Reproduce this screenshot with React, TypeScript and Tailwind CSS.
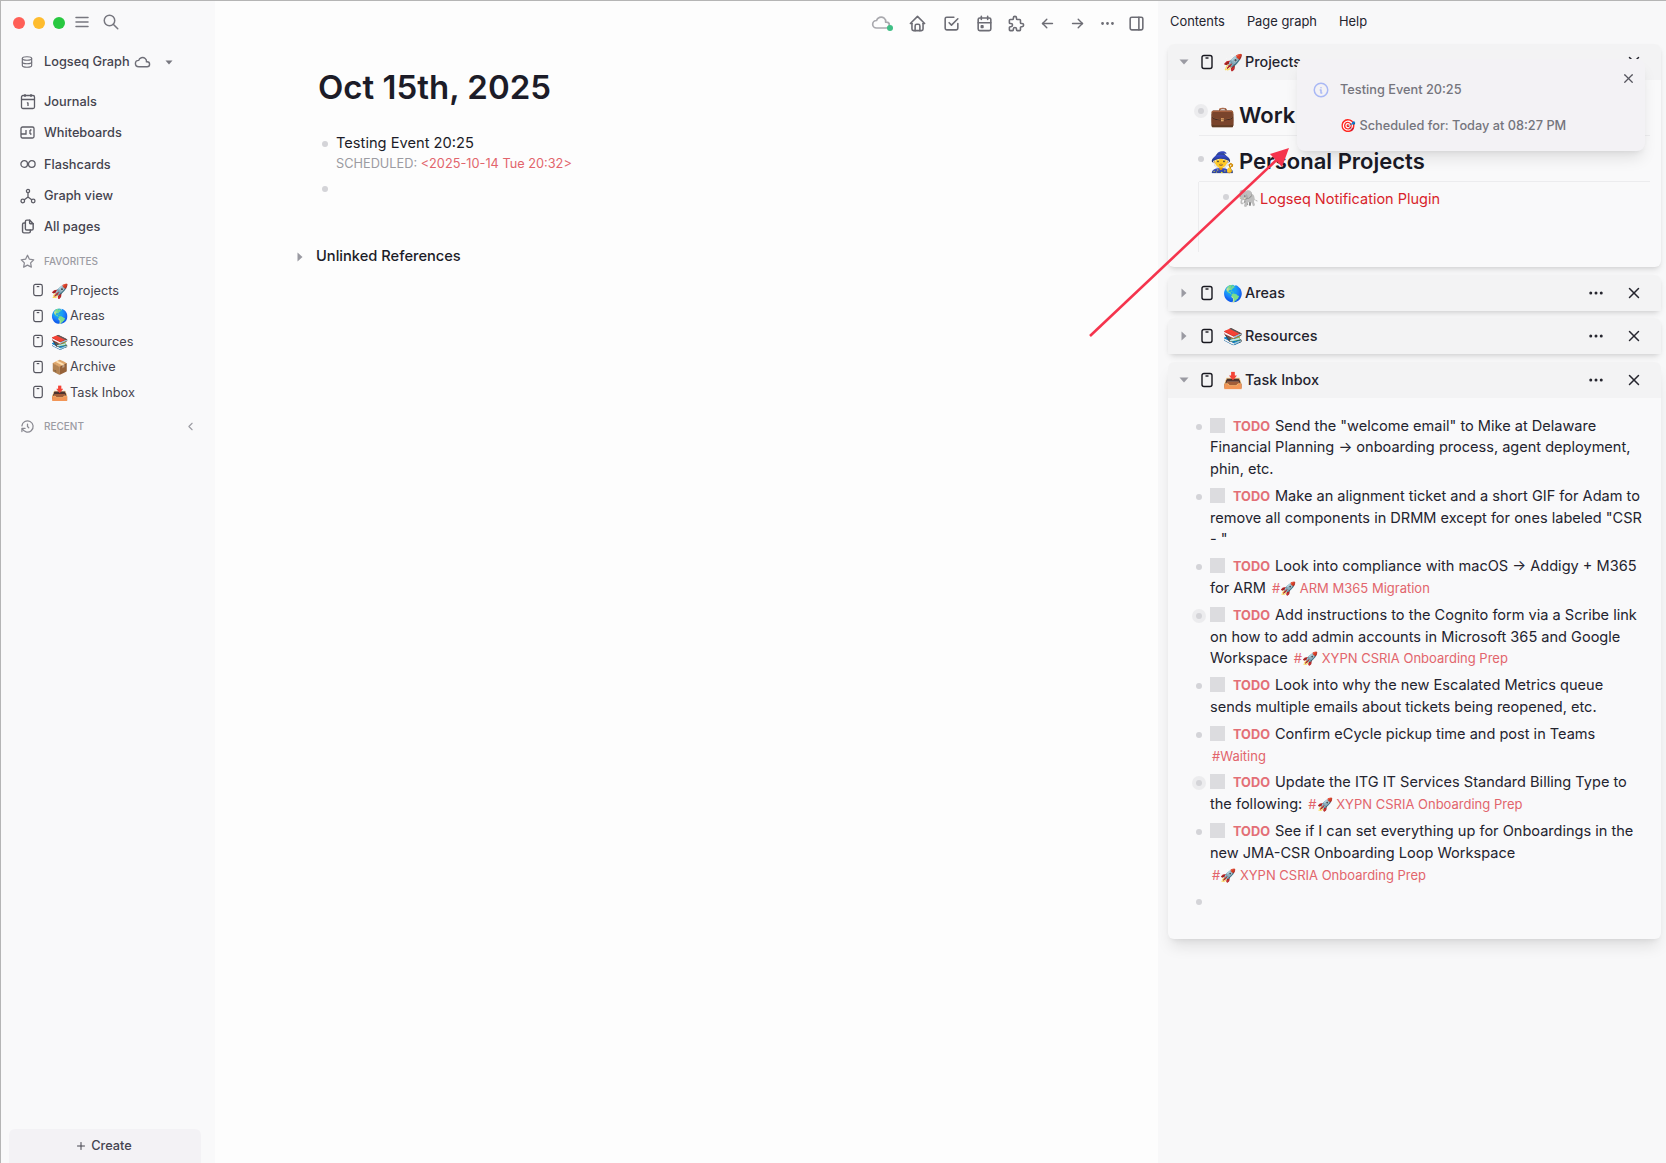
import {
  TbCalendarEvent, TbCheckbox, TbChevronLeft, TbCloud, TbDatabase, TbDots, TbFiles, TbHistory, TbHome,
  TbInfoCircle, TbLayoutSidebarRight, TbMenu2, TbPuzzle, TbSearch, TbStar, TbX,
  TbArrowLeft, TbArrowRight, TbPlus,
} from "react-icons/tb";

const Caret = ({ open }: { open?: boolean }) => (
  <svg width="10" height="10" viewBox="0 0 10 10" className="shrink-0 text-[#9a9aa2]" fill="currentColor">
    {open ? <path d="M0.5 2.5h9L5 7.5z" /> : <path d="M2.5 0.5v9l5-4.5z" />}
  </svg>
);

const PageIcon = ({ className }: { className?: string }) => (
  <svg width="14" height="16" viewBox="0 0 14 16" fill="none" stroke="currentColor" strokeWidth="1.4" className={className}>
    <rect x="2" y="1.5" width="10" height="13" rx="2" />
    <path d="M5.5 4h3" />
  </svg>
);

const Tag = ({ children }: { children: React.ReactNode }) => (
  <span className="inline-block mx-[2px] text-[13px] text-[#e2656c]">{children}</span>
);

const Todo = () => (
  <>
    <span className="inline-block w-[15px] h-[15px] bg-[#dcdcdf] align-[-2px] mr-[8px]" />
    <span className="text-[12.75px] font-bold text-[#e36f76] mr-[5px]">TODO</span>
  </>
);

const Dot = () => <span className="w-[6px] h-[6px] rounded-full bg-[#d4d4d8]" />;

const Block = ({ children, active }: { children: React.ReactNode; active?: boolean }) => (
  <div className="flex mb-[5px]">
    <div className="w-[42px] shrink-0 flex justify-end pr-[4px] pt-[4px]">
      <span className={`w-[14px] h-[14px] rounded-full flex items-center justify-center ${active ? "bg-[#ececee]" : ""}`}>
        <Dot />
      </span>
    </div>
    <div className="min-w-0 flex-1 pr-[16px]">{children}</div>
  </div>
);

const PanelHeader = ({ title, emoji, open }: { title: string; emoji: string; open?: boolean }) => (
  <div className="h-[36px] flex items-center bg-[#f3f3f4] rounded-t-[6px] pl-[11px] pr-[18px]">
    <Caret open={open} />
    <PageIcon className="ml-[11px] text-[#17171f]" />
    <span className="ml-[9px] text-[16px] w-[19px]">{emoji}</span>
    <span className="ml-[3px] text-[14.4px] font-medium text-[#23232e]">{title}</span>
    <TbDots size={18} className="ml-auto text-[#26262f]" />
    <TbX size={18} className="ml-[20px] text-[#26262f]" />
  </div>
);

const navItems = [
  { label: "Journals", icon: <svg width="16" height="17" viewBox="0 0 16 17" fill="none" stroke="currentColor" strokeWidth="1.3"><rect x="1.5" y="2.5" width="13" height="13" rx="1.5" /><path d="M1.5 6.5h13M5 1v3M11 1v3M8 9.5v3.5M7 10.2l1-.7" /></svg> },
  { label: "Whiteboards", icon: <svg width="15" height="13" viewBox="0 0 15 13" fill="none" stroke="currentColor" strokeWidth="1.3"><rect x="1" y="1" width="13" height="11" rx="1.5" /><path d="M1 8h5V4M10 8h1.5M10 4h1.5M10 4v4" /></svg> },
  { label: "Flashcards", icon: <svg width="16" height="10" viewBox="0 0 16 10" fill="none" stroke="currentColor" strokeWidth="1.3"><circle cx="4.2" cy="5" r="3.3" /><circle cx="11.8" cy="5" r="3.3" /></svg> },
  { label: "Graph view", icon: <svg width="16" height="16" viewBox="0 0 16 16" fill="none" stroke="currentColor" strokeWidth="1.3"><circle cx="8" cy="3" r="1.6" /><circle cx="2.8" cy="13" r="1.8" /><circle cx="13.2" cy="13" r="1.8" /><path d="M8 4.6V9M8 9l-4 3M8 9l4 3" /></svg> },
  { label: "All pages", icon: <TbFiles size={17} /> },
];

const favorites = [
  { label: "Projects", emoji: "🚀" },
  { label: "Areas", emoji: "🌎" },
  { label: "Resources", emoji: "📚" },
  { label: "Archive", emoji: "📦" },
  { label: "Task Inbox", emoji: "📥" },
];

const Sidebar = () => (
  <aside className="w-[215px] shrink-0 h-full flex flex-col bg-[#f9f9fa] border-l-[1px] border-[#b5b5b5] text-[#45444f]">
    <div className="h-[44px] flex items-center pl-[12px]">
      <span className="w-[12px] h-[12px] rounded-full bg-[#ff5f57]" />
      <span className="w-[12px] h-[12px] rounded-full bg-[#febc2e] ml-[8px]" />
      <span className="w-[12px] h-[12px] rounded-full bg-[#28c840] ml-[8px]" />
      <TbMenu2 size={18} className="ml-[8px] -mt-[2px] text-[#77777f]" />
      <TbSearch size={18} className="ml-[11px] -mt-[2px] text-[#77777f]" />
    </div>
    <div className="h-[34px] flex items-center pl-[19px] text-[12.75px] font-medium">
      <TbDatabase size={14} className="text-[#6f6f78]" />
      <span className="ml-[10px]">Logseq Graph</span>
      <TbCloud size={17} className="ml-[4px] text-[#6f6f78]" />
      <svg width="8" height="5" viewBox="0 0 8 5" className="ml-[14px] text-[#77777f]" fill="currentColor"><path d="M0.5 0.5h7L4 4.5z" /></svg>
    </div>
    <nav className="mt-[7px]">
      {navItems.map((item) => (
        <div key={item.label} className="h-[31.3px] flex items-center text-[12.75px] font-medium">
          <span className="w-[43px] shrink-0 flex justify-center pl-[10px] text-[#5d5d66]">{item.icon}</span>
          <span>{item.label}</span>
        </div>
      ))}
    </nav>
    <div className="mt-[7px] h-[24px] flex items-center">
      <span className="w-[43px] shrink-0 flex justify-center pl-[10px] text-[#8a8a92]"><TbStar size={15} /></span>
      <span className="text-[10px] font-medium text-[#9b9ba2]">FAVORITES</span>
    </div>
    <div className="mt-[4px]">
      {favorites.map((f) => (
        <div key={f.label} className="h-[25.5px] flex items-center text-[12.75px]">
          <PageIcon className="ml-[31px] text-[#55555e] w-[12px]" />
          <span className="ml-[7px] w-[19px] text-[14px]">{f.emoji}</span>
          <span>{f.label}</span>
        </div>
      ))}
    </div>
    <div className="mt-[10px] h-[24px] flex items-center pr-[18px]">
      <span className="w-[43px] shrink-0 flex justify-center pl-[10px] text-[#8a8a92]"><TbHistory size={15} /></span>
      <span className="text-[10px] font-medium text-[#9b9ba2]">RECENT</span>
      <TbChevronLeft size={13} className="ml-auto text-[#9b9ba2]" />
    </div>
    <div className="mt-auto ml-[8px] mr-[14px] h-[34px] pr-[3px] bg-[#f3f2f5] rounded-t-[6px] flex items-center justify-center text-[12.75px] font-medium">
      <TbPlus size={12} className="mr-[4px]" />
      Create
    </div>
  </aside>
);

const Toolbar = () => (
  <header className="h-[44px] flex items-center justify-end pr-[12px] text-[#6d6d75]">
    <span className="relative mr-[17px]">
      <TbCloud size={20} className="text-[#a9a9ae]" />
      <span className="absolute right-[-2px] bottom-[2px] w-[6px] h-[6px] rounded-full bg-[#3fbf85]" />
    </span>
    <TbHome size={19} className="mr-[15px]" />
    <TbCheckbox size={19} className="mr-[14px]" />
    <TbCalendarEvent size={19} className="mr-[13px]" />
    <TbPuzzle size={19} className="mr-[13px]" />
    <TbArrowLeft size={17} className="mr-[13px]" />
    <TbArrowRight size={17} className="mr-[13px]" />
    <TbDots size={17} className="mr-[11px]" />
    <TbLayoutSidebarRight size={19} />
  </header>
);

const Main = () => (
  <main className="flex-1 min-w-0 h-full bg-[#fdfdfd] text-[#1c1c28]">
    <Toolbar />
    <div className="pl-[103px]">
      <h1 className="mt-[19px] text-[33px] leading-[46px] font-semibold">Oct 15th, 2025</h1>
      <div className="mt-[22px] flex">
        <span className="mt-[9px] w-[6px] h-[6px] rounded-full bg-[#d4d4d8] ml-[4px] mr-[8px]" />
        <div>
          <div className="text-[14.66px] leading-[22px]">Testing Event 20:25</div>
          <div className="text-[12.75px] leading-[19px]">
            <span className="text-[#9b9ba2]">SCHEDULED: </span>
            <span className="text-[#e2656c]">&lt;2025-10-14 Tue 20:32&gt;</span>
          </div>
        </div>
      </div>
      <div className="mt-[13px] ml-[4px] w-[6px] h-[6px] rounded-full bg-[#d4d4d8]" />
      <div className="mt-[54px] -ml-[23px] flex items-center">
        <Caret />
        <span className="ml-[11px] text-[14.66px] font-medium">Unlinked References</span>
      </div>
    </div>
  </main>
);

const Heading = ({ emoji, title }: { emoji: string; title: string }) => (
  <span className="text-[22px] leading-[36px] font-semibold text-[#1a1a26]">
    <span className="inline-block w-[29px] text-[20px]">{emoji}</span>
    {title}
  </span>
);

const RightPanel = () => (
  <section className="w-[508px] shrink-0 h-full bg-[#f8f8f9] text-[#24242f] pl-[10px] pr-[5px]">
    <div className="h-[41px] mb-[2px] flex items-center gap-[22px] pl-[2px] text-[12.9px]">
      <span>Contents</span>
      <span>Page graph</span>
      <span>Help</span>
    </div>
    <div className="rounded-[6px] shadow-md mb-[7.5px] h-[223px] bg-[#f9f9fa]">
      <PanelHeader title="Projects" emoji="🚀" open />
      <div className="pl-[31px] pr-[11px] pt-[12px]">
        <div className="relative pl-[11px] h-[44px] pt-[5px] border-b border-[#ececee]">
          <span className="absolute left-[-5px] top-[12px] w-[14px] h-[14px] rounded-full bg-[#ececee] flex items-center justify-center"><Dot /></span>
          <Heading emoji="💼" title="Work" />
        </div>
        <div className="relative pl-[11px] h-[46px] pt-[7px] border-b border-[#ececee]">
          <span className="absolute left-[-1px] top-[20px] w-[6px] h-[6px] rounded-full bg-[#d4d4d8]" />
          <Heading emoji="🧙" title="Personal Projects" />
        </div>
        <div className="relative ml-[-1px] pl-[39px] pt-[4px] text-[14.5px] leading-[24px] text-[#d8232a] border-l border-[#ececee] h-[70px]">
          <span className="absolute left-[24px] top-[12px] w-[6px] h-[6px] rounded-full bg-[#d4d4d8]" />
          <span className="inline-block w-[22px] text-[17px]">🐘</span>
          Logseq Notification Plugin
        </div>
      </div>
    </div>
    <div className="rounded-[6px] shadow-md mb-[7.5px]"><PanelHeader title="Areas" emoji="🌎" /></div>
    <div className="rounded-[6px] shadow-md mb-[7.5px]"><PanelHeader title="Resources" emoji="📚" /></div>
    <div className="rounded-[6px] shadow-lg h-[577px] bg-[#f9f9fa]">
      <PanelHeader title="Task Inbox" emoji="📥" open />
      <div className="pt-[18px] text-[14.56px] leading-[21.8px] text-[#24242f]">
        <Block><Todo />Send the "welcome email" to Mike at Delaware Financial Planning → onboarding process, agent deployment, phin, etc.</Block>
        <Block><Todo />Make an alignment ticket and a short GIF for Adam to remove all components in DRMM except for ones labeled "CSR - "</Block>
        <Block><Todo />Look into compliance with macOS → Addigy + M365 for ARM <Tag>#🚀 ARM M365 Migration</Tag></Block>
        <Block active><Todo />Add instructions to the Cognito form via a Scribe link on how to add admin accounts in Microsoft 365 and Google Workspace <Tag>#🚀 XYPN CSRIA Onboarding Prep</Tag></Block>
        <Block><Todo />Look into why the new Escalated Metrics queue sends multiple emails about tickets being reopened, etc.</Block>
        <Block><Todo />Confirm eCycle pickup time and post in Teams <Tag>#Waiting</Tag></Block>
        <Block active><Todo />Update the ITG IT Services Standard Billing Type to the following: <Tag>#🚀 XYPN CSRIA Onboarding Prep</Tag></Block>
        <Block><Todo />See if I can set everything up for Onboardings in the new JMA-CSR Onboarding Loop Workspace <Tag>#🚀 XYPN CSRIA Onboarding Prep</Tag></Block>
        <Block>&nbsp;</Block>
      </div>
    </div>
  </section>
);

const Notification = () => (
  <div className="absolute left-[1297px] top-[58px] w-[348px] h-[92px] bg-[#f3f2f5] rounded-[8px] shadow-lg text-[12.75px] text-[#75757d] font-medium">
    <TbInfoCircle size={18} className="absolute left-[15px] top-[22px] text-[#a9b8f5]" />
    <div className="absolute left-[43px] top-[21px]">Testing Event 20:25</div>
    <div className="absolute left-[43px] top-[57px]">🎯 Scheduled for: Today at 08:27 PM</div>
    <TbX size={15} className="absolute right-[9px] top-[12px] text-[#55555e]" />
  </div>
);

const Arrow = () => (
  <svg width="1666" height="1163" className="absolute inset-0 pointer-events-none">
    <path d="M1090 335L1286 150" stroke="#f5344d" strokeWidth="2.6" fill="none" />
    <path d="M1289 147L1270 153L1282 166z" fill="#f5344d" />
  </svg>
);

export default function App() {
  return (
    <div className="relative h-screen w-full overflow-hidden flex border-t border-[#b5b5b5]" style={{ fontFamily: "Inter, sans-serif" }}>
      <Sidebar />
      <Main />
      <RightPanel />
      <Notification />
      <Arrow />
    </div>
  );
}
